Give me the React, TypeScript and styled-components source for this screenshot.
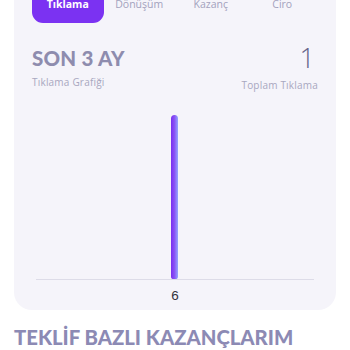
import React from "react";
import styled, { createGlobalStyle } from "styled-components";

const Global = createGlobalStyle`
  html, body { margin: 0; padding: 0; background: #ffffff; overflow: hidden; }
  body { font-family: "Open Sans", "DejaVu Sans", sans-serif; }
`;

const Page = styled.div`
  width: 350px;
  margin-top: -30px;
  padding: 0 14px;
  box-sizing: border-box;
`;

const Card = styled.div`
  background: #f5f4fa;
  border-radius: 0 0 18px 18px;
  padding: 14px 18px 6px;
  display: flex;
  flex-direction: column;
`;

const Tabs = styled.div`
  display: grid;
  grid-template-columns: repeat(4, 1fr);
  align-items: center;
`;

const Tab = styled.div<{ $active?: boolean }>`
  height: 39px;
  border-radius: 11px;
  display: flex;
  align-items: center;
  justify-content: center;
  font-size: 10.5px;
  font-weight: ${(p) => (p.$active ? 700 : 400)};
  color: ${(p) => (p.$active ? "#ffffff" : "#a3a2bd")};
  background: ${(p) => (p.$active ? "#7b32f2" : "transparent")};
`;

const Header = styled.div`
  display: flex;
  justify-content: space-between;
  align-items: flex-start;
  margin-top: 20px;
`;

const Col = styled.div<{ $right?: boolean }>`
  display: flex;
  flex-direction: column;
  align-items: ${(p) => (p.$right ? "flex-end" : "flex-start")};
`;

const Title = styled.div`
  font-family: Lato, "Open Sans", sans-serif;
  font-size: 20.5px;
  font-weight: 900;
  color: #8e8cae;
  line-height: 30px;
  letter-spacing: 0.2px;
`;

const Sub = styled.div`
  font-size: 10px;
  color: #a8a7bf;
  margin-top: 2px;
  letter-spacing: 0.2px;
`;

const Big = styled.div`
  font-size: 27px;
  font-weight: 300;
  color: #65648a;
  line-height: 30px;
  padding-right: 3px;
`;

const SubRight = styled(Sub)`
  margin-top: 5px;
`;

const Chart = styled.div`
  margin: 15px 4px 0;
  height: 172px;
  border-bottom: 1px solid #dddce8;
  display: flex;
  justify-content: center;
  align-items: flex-end;
`;

const Bar = styled.div`
  width: 7px;
  height: 164px;
  border-radius: 4px 4px 3px 3px;
  background: linear-gradient(90deg, #7a2ff0 0%, #8a55f5 50%, #94a6ff 100%);
  margin-right: 1px;
`;

const XLabel = styled.div`
  text-align: center;
  font-family: "Liberation Sans", Arial, sans-serif;
  font-size: 13.5px;
  color: #333340;
  margin-top: 8px;
  line-height: 16px;
`;

const Heading = styled.div`
  margin-top: 14px;
  font-family: Lato, "Open Sans", sans-serif;
  font-size: 20.3px;
  font-weight: 900;
  color: #8c8ab4;
  line-height: 26px;
`;

export default function App() {
  return (
    <>
      <Global />
      <Page>
        <Card>
          <Tabs>
            <Tab $active>Tıklama</Tab>
            <Tab>Dönüşüm</Tab>
            <Tab>Kazanç</Tab>
            <Tab>Ciro</Tab>
          </Tabs>
          <Header>
            <Col>
              <Title>SON 3 AY</Title>
              <Sub>Tıklama Grafiği</Sub>
            </Col>
            <Col $right>
              <Big>1</Big>
              <SubRight>Toplam Tıklama</SubRight>
            </Col>
          </Header>
          <Chart>
            <Bar />
          </Chart>
          <XLabel>6</XLabel>
        </Card>
        <Heading>TEKLİF BAZLI KAZANÇLARIM</Heading>
      </Page>
    </>
  );
}
